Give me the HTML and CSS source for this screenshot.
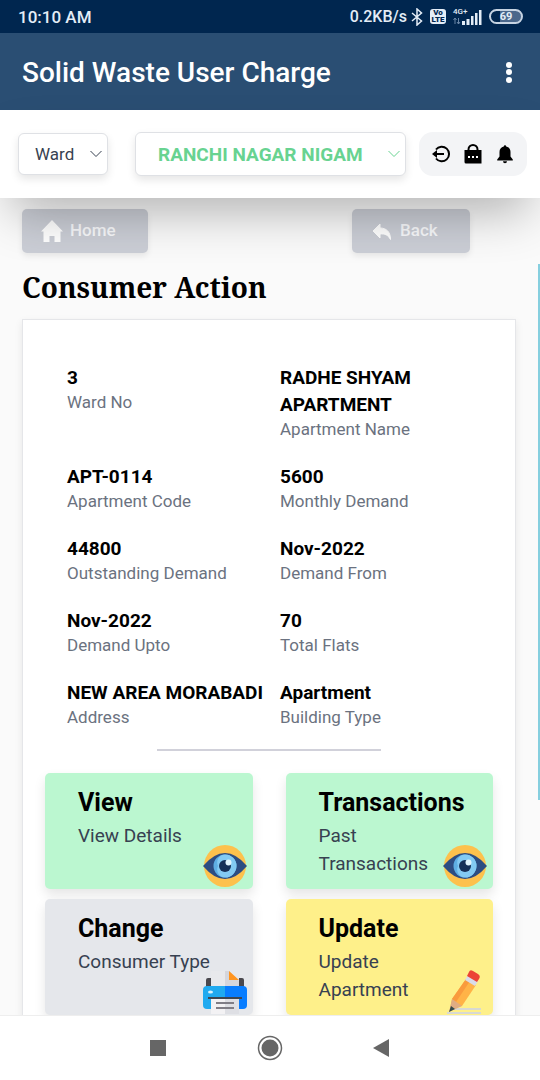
FILE: index.html
```html
<!DOCTYPE html>
<html lang="en">
<head>
<meta charset="utf-8">
<meta name="viewport" content="width=device-width, initial-scale=1">
<title>Solid Waste User Charge</title>
<link rel="stylesheet" href="styles.css">
</head>
<body>
<svg class="defs" aria-hidden="true">
  <symbol id="eye" viewBox="0 0 44 44">
    <circle cx="22" cy="22" r="21" fill="#fdc14d"/>
    <path d="M0 22Q22-4 44 22Q22 48 0 22Z" fill="#2d4d82"/>
    <circle cx="22" cy="22" r="11.500" fill="#5eaee3"/>
    <path d="M22 10.500a11.500 11.500 0 0 1 0 23a8 8 0 0 1-7-11.500a8 8 0 0 1 7-11.500Z" fill="#83caf2"/>
    <circle cx="22" cy="22" r="6" fill="#173058"/>
    <circle cx="25.500" cy="18.500" r="3" fill="#e3f4fd"/>
  </symbol>
</svg>
<div class="app">
  <div class="status">
    <span class="clock">10:10 AM</span>
    <div class="status-right">
      <span>0.2KB/s</span>
      <svg width="12" height="18" viewBox="0 0 12 18" fill="none" stroke="#e4edf7" stroke-width="1.500"><path d="M1 5L10.500 13L6 17V1L10.500 5L1 13"/></svg>
      <span class="volte"><span>Vo</span><span>LTE</span></span>
      <span class="signal">
        <svg width="30" height="18" viewBox="0 0 30 18"><path d="M9 13h3v4H9zM13.500 11h3v6h-3zM18 8h2.500v9H18zM22 5h2.500v12H22zM26 2h2.500v15H26z" fill="#e4edf7"/><path d="M2 16v-6m-1.500 2L2 10l1.500 2M5.500 10v6M4 14l1.500 2L7 14" stroke="#6b87a8" fill="none"/></svg>
        <span class="net">4G+</span>
      </span>
      <span class="battery">69</span>
    </div>
  </div>
  <header class="appbar">
    <h1>Solid Waste User Charge</h1>
    <button class="more" type="button" aria-label="More options"><svg width="8" height="24" viewBox="0 0 8 24" fill="#fff"><circle cx="4" cy="4" r="3"/><circle cx="4" cy="11" r="3"/><circle cx="4" cy="19" r="3"/></svg></button>
  </header>
  <div class="toolbar">
    <div class="picker ward">
      <select aria-label="Ward"><option>Ward</option></select>
      <svg width="12" height="8" viewBox="0 0 12 8" fill="none" stroke="currentColor"><path d="M.5 1L6 6.500L11.500 1"/></svg>
    </div>
    <div class="picker nigam">
      <select aria-label="Municipality"><option>RANCHI NAGAR NIGAM</option></select>
      <svg width="12" height="8" viewBox="0 0 12 8" fill="none" stroke="currentColor"><path d="M.5 1L6 6.500L11.500 1"/></svg>
    </div>
    <div class="actions">
      <button type="button" aria-label="Log out"><svg width="20" height="20" viewBox="0 0 20 20"><path d="M5 5.500A7.300 7.300 0 1 1 5 14.500" fill="none" stroke="#000" stroke-width="2"/><path d="M13 10H4" stroke="#000" stroke-width="2"/><path d="M1 10l5-4v8z"/></svg></button>
      <button type="button" aria-label="Password"><svg width="20" height="20" viewBox="0 0 20 20"><path d="M5.500 7V5.500a4.500 4.500 0 0 1 9 0V7" fill="none" stroke="#000" stroke-width="2"/><path d="M1.500 6h17v13.500H3A1.500 1.500 0 0 1 1.500 18z"/><path d="M5 12h2v2H5zM9 12h2v2H9zM13 12h2v2h-2z" fill="#fff"/></svg></button>
      <button type="button" aria-label="Notifications"><svg width="20" height="20" viewBox="0 0 20 20"><path d="M8.800 2.500a1.200 1.200 0 0 1 2.400 0C14 3 15.500 5.200 15.500 8v4.500l2.300 3v1H2.200v-1l2.300-3V8c0-2.800 1.500-5 4.300-5.500zM8 17.300h4a2 2 0 0 1-4 0z"/></svg></button>
    </div>
  </div>
  <main class="content">
    <nav class="crumbs">
      <button class="crumb" type="button"><svg width="24" height="24" viewBox="0 0 24 24" fill="#fff"><path d="M12 1L23 12.500h-2.500V23H14.500v-6h-5v6H3.500V12.500H1z"/></svg><span>Home</span></button>
      <button class="crumb back" type="button"><svg width="20" height="20" viewBox="0 0 20 20" fill="#fff"><path d="M8 3L1 10l7 7v-4c5-.5 8 1 10.500 5.500C18.500 11 14.500 7 8 7z" stroke="#fff" stroke-linejoin="round"/></svg><span>Back</span></button>
    </nav>
    <h2>Consumer Action</h2>
    <section class="card">
      <dl class="fields">
        <div><dd>3</dd><dt>Ward No</dt></div>
        <div><dd>RADHE SHYAM APARTMENT</dd><dt>Apartment Name</dt></div>
        <div><dd>APT-0114</dd><dt>Apartment Code</dt></div>
        <div><dd>5600</dd><dt>Monthly Demand</dt></div>
        <div><dd>44800</dd><dt>Outstanding Demand</dt></div>
        <div><dd>Nov-2022</dd><dt>Demand From</dt></div>
        <div><dd>Nov-2022</dd><dt>Demand Upto</dt></div>
        <div><dd>70</dd><dt>Total Flats</dt></div>
        <div><dd>NEW AREA MORABADI</dd><dt>Address</dt></div>
        <div><dd>Apartment</dd><dt>Building Type</dt></div>
      </dl>
      <hr>
      <div class="tiles">
        <button class="tile green" type="button"><strong>View</strong><span>View Details</span><svg class="art" viewBox="0 0 44 44"><use href="#eye"/></svg></button>
        <button class="tile green" type="button"><strong>Transactions</strong><span>Past Transactions</span><svg class="art" viewBox="0 0 44 44"><use href="#eye"/></svg></button>
        <button class="tile gray" type="button"><strong>Change</strong><span>Consumer Type</span>
          <svg class="art" viewBox="0 0 44 44"><path d="M3 17V10q0-2 2-2h3v10zM36 8h3q2 0 2 2v8h-5z" fill="#49484e"/><path d="M8 1h14v17H8z" fill="#e8e9ec"/><path d="M22 1h4l10 10v7H22z" fill="#d5d6dc"/><path d="M26 1l10 9H26z" fill="#ff9520"/><path d="M4 16h18v23H4q-4 0-4-4V20q0-4 4-4z" fill="#20aaf0"/><path d="M22 16h18q4 0 4 4v15q0 4-4 4H22z" fill="#087dff"/><path d="M5 27h34v2H5z" fill="#3e4651"/><path d="M8 29h14v15H8z" fill="#f3f2f4"/><path d="M22 29h14v15H22z" fill="#dedfe4"/><path d="M13 32h18v2H13zm0 5h18v2H13z" fill="#807e86"/><ellipse cx="7.500" cy="22" rx="2.500" ry="1.500" fill="#d9f2fd"/></svg></button>
        <button class="tile yellow" type="button"><strong>Update</strong><span>Update Apartment</span>
          <svg class="art" viewBox="0 0 44 44"><path d="M8 38h30v2H8zm-4 4h34v2H4z" fill="#d8d9d2"/><path d="M23 9l10 6-14 21-12 3 2-10z" fill="#ffb347"/><path d="M23 9l4 2-14 21-4-3z" fill="#f99b3d"/><path d="M9 29l10 7-13 6z" fill="#dfac83"/><path d="M8 36l4 3-6 3z" fill="#334b4c"/><path d="M25 5l10 6-3 5-10-6z" fill="#d9dce8"/><path d="M26 2q1-3 4-1l5 3q3 2 1 5l-2 3-10-6z" fill="#ec4436"/></svg></button>
      </div>
    </section>
  </main>
  <div class="scroll-thumb"></div>
  <nav class="sysnav">
    <button type="button" aria-label="Recents"><svg width="16" height="16" viewBox="0 0 16 16"><path d="M0 0h16v16H0z" fill="#666"/></svg></button>
    <button type="button" aria-label="Home screen"><svg width="26" height="26" viewBox="0 0 26 26"><circle cx="13" cy="13" r="11.500" fill="none" stroke="#666" stroke-width="1.500"/><circle cx="13" cy="13" r="8.500" fill="#666"/></svg></button>
    <button type="button" aria-label="Go back"><svg width="16" height="18" viewBox="0 0 16 18"><path d="M16 0v18L0 9z" fill="#666"/></svg></button>
  </nav>
</div>
</body>
</html>
```
FILE: styles.css
```css
* { box-sizing: border-box; }
body { margin: 0; font-family: Roboto, "Open Sans", sans-serif; background: #fafafa; color: #000; }
button, select { font: inherit; color: inherit; border: 0; margin: 0; padding: 0; background: none; }
button { cursor: pointer; }
svg { display: block; flex: none; }
.defs { position: absolute; width: 0; height: 0; }
.app { position: relative; height: 100vh; display: flex; flex-direction: column; overflow: hidden; }

.status { flex: none; height: 33px; padding: 0 17px 0 18px; display: flex; align-items: center; justify-content: space-between; background: #00264f; color: #e4edf7; font-size: 16px; font-weight: 500; }
.clock { font-size: 17px; }
.status-right { display: flex; align-items: center; gap: 4px; }
.volte { display: flex; flex-direction: column; align-items: center; width: 16px; height: 15px; margin-left: 3px; border-radius: 3px; background: #e4edf7; color: #00264f; font-size: 8px; line-height: 7px; font-weight: 900; }
.signal { position: relative; margin-left: 3px; }
.net { position: absolute; left: 0; top: 0; font-size: 8px; line-height: 8px; }
.battery { width: 34px; height: 15px; margin-left: 2px; border: 2px solid #c6d3e2; border-radius: 8px; background: linear-gradient(90deg, #00264f 0 30%, #4a678b 30%); font-size: 11px; line-height: 12px; font-weight: 700; text-align: center; }

.appbar { flex: none; height: 77px; padding: 2px 27px 0 22px; display: flex; align-items: center; justify-content: space-between; background: #2a4e73; color: #fff; }
.appbar h1 { margin: 0; font-size: 28px; line-height: 32px; font-weight: 500; }

.toolbar { position: relative; z-index: 2; flex: none; height: 88px; padding: 0 13px 0 18px; display: flex; align-items: center; background: #fff; box-shadow: 0 25px 50px -12px rgba(0, 0, 0, .3); }
.picker { position: relative; display: flex; align-items: center; border: 1px solid #dfe1e5; border-radius: 6px; background: #fff; box-shadow: 0 4px 8px rgba(0, 0, 0, .1); }
.picker select { width: 100%; height: 100%; appearance: none; background: none; }
.picker svg { position: absolute; right: 5px; pointer-events: none; }
.ward { width: 90px; height: 42px; color: #374151; font-size: 17px; }
.ward select { padding-left: 16px; }
.nigam { flex: 1; height: 44px; margin: 0 13px 0 27px; color: #68d391; font-size: 19px; font-weight: 700; }
.nigam select { padding-left: 22px; }
.actions { display: flex; align-items: center; gap: 12px; height: 44px; padding: 0 12px; border-radius: 14px; background: #f3f4f6; }

.content { flex: 1; min-height: 0; padding: 11px 24px 24px 22px; overflow: auto; scrollbar-width: none; }
.crumbs { display: flex; justify-content: space-between; padding-right: 46px; }
.crumb { display: flex; align-items: center; gap: 6px; width: 126px; height: 44px; padding: 0 18px; border-radius: 5px; background: #cbced6; color: #f8f9fb; font-size: 17px; font-weight: 500; box-shadow: 0 3px 6px rgba(0, 0, 0, .08); }
.crumb span { padding-bottom: 2px; }
.back { width: 118px; padding-left: 20px; gap: 8px; }
h2 { margin: 16px 0 13px; font-family: "Noto Serif", "Droid Serif", "DejaVu Serif", serif; font-size: 28px; line-height: 37px; font-weight: 700; }

.card { border: 1px solid #e5e6e9; background: #fff; box-shadow: 0 3px 8px rgba(0, 0, 0, .08); padding: 44px 22px; }
.fields { display: grid; grid-template-columns: 1fr 1fr; row-gap: 23px; margin: 0 0 0 22px; }
.fields div { display: flex; flex-direction: column; }
.fields dd { margin: 0; font-size: 19px; line-height: 27px; font-weight: 700; }
.fields dt { color: #6b7280; font-size: 17px; line-height: 22px; }
hr { width: 50%; margin: 21px auto 22px; border: 0; border-top: 2px solid #d1d1da; }
.tiles { display: grid; grid-template-columns: 1fr 1fr; gap: 10px 33px; }
.tile { position: relative; display: flex; flex-direction: column; align-items: flex-start; height: 116px; padding: 13px 22px 0 33px; border-radius: 5px; text-align: left; box-shadow: 0 6px 12px rgba(0, 0, 0, .1); }
.tile strong { font-size: 25px; line-height: 34px; font-weight: 700; }
.tile span { max-width: 144px; margin-top: 2px; color: #374151; font-size: 19px; line-height: 28px; }
.green { background: #bbf7d0; }
.gray { background: #e5e7eb; }
.yellow { background: #fef08a; }
.art { position: absolute; right: 6px; bottom: 1px; width: 44px; height: 44px; }

.scroll-thumb { position: absolute; z-index: 3; right: 0; top: 264px; width: 2px; height: 536px; background: #86cfdf; }
.sysnav { position: relative; z-index: 3; flex: none; height: 65px; padding: 0 151px 0 150px; display: flex; align-items: center; justify-content: space-between; border-top: 1px solid #eee; background: #fff; }
```
